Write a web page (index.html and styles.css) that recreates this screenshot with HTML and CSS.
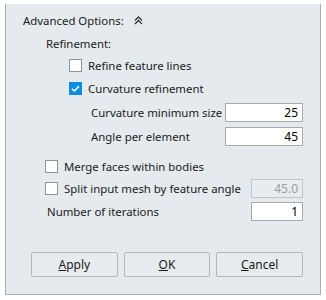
FILE: index.html
```html
<!DOCTYPE html>
<html lang="en">
  <head>
    <meta charset="UTF-8" />
    <title>Advanced Options</title>
    <link rel="stylesheet" href="styles.css">
  </head>
  <body>
    <div class="panel">
      <div class="row head">
        <span>Advanced Options:</span>
        <svg class="chev" width="9" height="9" viewBox="0 0 9 9">
          <path d="M1 4.5 L4.5 1 L8 4.5 M1 8 L4.5 4.5 L8 8" fill="none" stroke="#333" stroke-width="1.3" />
        </svg>
      </div>
      <div class="row sub">Refinement:</div>
      <label class="row check lvl2">
        <span class="box"></span>Refine feature lines
      </label>
      <label class="row check lvl2 tall">
        <span class="box on">
          <svg width="13" height="13" viewBox="0 0 13 13">
            <path d="M3 6.8 L5.4 9 L10 4.2" fill="none" stroke="#fff" stroke-width="1.6" />
          </svg>
        </span>Curvature refinement
      </label>
      <div class="row field lvl3 tall">
        <span>Curvature minimum size</span>
        <span class="input wide">25</span>
      </div>
      <div class="row field lvl3 tall">
        <span>Angle per element</span>
        <span class="input wide">45</span>
      </div>
      <label class="row check lvl1 gap">
        <span class="box"></span>Merge faces within bodies
      </label>
      <div class="row field lvl1">
        <label class="check"><span class="box"></span>Split input mesh by feature angle</label>
        <span class="input off">45.0</span>
      </div>
      <div class="row field lvl1 tall">
        <span class="num">Number of iterations</span>
        <span class="input">1</span>
      </div>
      <div class="buttons">
        <button><u>A</u>pply</button>
        <button><u>O</u>K</button>
        <button><u>C</u>ancel</button>
      </div>
    </div>
  </body>
</html>
```

FILE: styles.css
```css
* {
  margin: 0;
  padding: 0;
  box-sizing: border-box;
}
body {
  background: #fff;
  font-family: "Noto Sans", "Liberation Sans", sans-serif;
  font-size: 11.4px;
  color: #1b1b1b;
}
.panel {
  margin: 4px 0 0 5px;
  width: 316px;
  height: 291px;
  background: #e5eaee;
  border: 1px solid #a9adb0;
  border-top: none;
  padding: 4px 17px 0 0;
}
.row {
  display: flex;
  align-items: center;
  height: 22px;
  white-space: nowrap;
}
.tall {
  height: 24px;
}
.head {
  height: 24px;
  padding-left: 17px;
}
.chev {
  margin-left: 10px;
}
.sub {
  padding-left: 40px;
}
.lvl1 {
  padding-left: 39px;
}
.lvl2 {
  padding-left: 63px;
}
.lvl3 {
  padding-left: 85px;
}
.gap {
  margin-top: 7px;
}
.check {
  display: flex;
  align-items: center;
}
.box {
  width: 13px;
  height: 13px;
  border: 1px solid #8f9499;
  background: #fff;
  margin-right: 6px;
  display: flex;
}
.box.on {
  background: #0a8ee0;
  border-color: #0a8ee0;
}
.box.on svg {
  margin: -1px;
}
.field {
  justify-content: space-between;
}
.num {
  padding-left: 2px;
}
.input {
  width: 52px;
  height: 19px;
  background: #fff;
  border: 1px solid #a6abb0;
  text-align: right;
  padding-right: 4px;
  line-height: 17px;
  font-size: 12px;
  color: #000;
}
.input.wide {
  width: 78px;
}
.input.off {
  background: #e9ecef;
  border-color: #c0c4c8;
  color: #9a9ea2;
}
.buttons {
  display: flex;
  gap: 6px;
  margin: 29px 0 0 25px;
}
button {
  width: 87px;
  height: 25px;
  font-family: inherit;
  font-size: 12px;
  color: #1b1b1b;
  background: #e6ebef;
  border: 1px solid #b3b7bb;
  border-radius: 2px;
}
```
